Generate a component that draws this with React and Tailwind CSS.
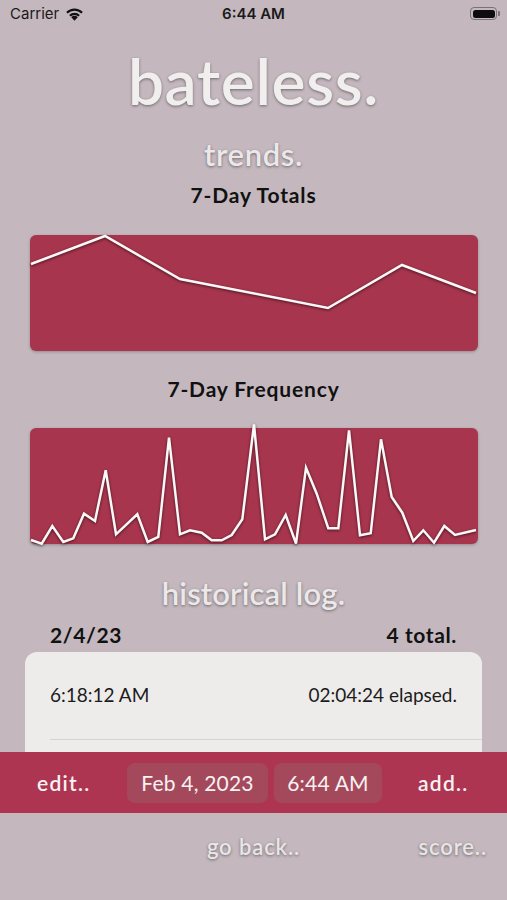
import React from 'react';

// chart points, in px inside each 448x116 panel
const TOTALS = [[1, 29], [75, 1], [150, 44], [298, 73], [372, 30], [446, 58]];
const FREQUENCY = [
  [1, 112], [11.7, 115.7], [22.3, 98], [33.3, 114], [43.3, 110.3], [54, 85.7], [65, 93],
  [75.7, 42.3], [86, 106.3], [107.3, 86.3], [117.7, 114], [128.3, 109], [139, 9.7],
  [150, 106.3], [160, 102.3], [171.7, 104.7], [181.7, 112.3], [191.7, 112.3], [201.7, 107],
  [212.3, 91.3], [224, -3.7], [235, 111.3], [245, 106.3], [255.7, 87], [266, 115.7],
  [276, 39.7], [286.7, 65.7], [298.3, 100.3], [308.3, 100.3], [319, 2.3], [330, 107.3],
  [340.7, 105.3], [351, 11.3], [361.7, 69], [372.3, 84.7], [383.3, 113], [393.3, 102.3],
  [404, 114.7], [414.3, 98], [425, 107], [446, 102],
];

const Chart = ({ points }) => (
  <div className="ml-[30px] w-[448px] h-[116px] rounded-[6px] bg-[#a8354e] shadow-[0_1px_3px_rgba(0,0,0,0.25)]">
    <svg
      width="448"
      height="116"
      viewBox="0 0 448 116"
      className="overflow-visible drop-shadow-[0_1px_1.5px_rgba(0,0,0,0.6)]"
    >
      <polyline
        points={points.map((p) => p.join(',')).join(' ')}
        fill="none"
        stroke="#fbf8f8"
        strokeWidth="2.5"
        strokeLinejoin="miter"
      />
    </svg>
  </div>
);

const StatusBar = () => (
  <div className="relative h-[28px] font-['Inter',sans-serif] text-[#1a1a1a]">
    <div className="absolute left-[10px] top-[5px] flex items-center gap-[6px]">
      <span className="text-[15px] leading-[18px]">Carrier</span>
      <svg width="19" height="14" viewBox="0 0 18 13">
        <path d="M9 12.8 L5.9 9.5 A4.4 4.4 0 0 1 12.1 9.5 Z" fill="#111" />
        <path d="M3.9 7.4 A7.2 7.2 0 0 1 14.1 7.4 L12.6 8.9 A5.1 5.1 0 0 0 5.4 8.9 Z" fill="#111" />
        <path d="M1.1 4.6 A11 11 0 0 1 16.9 4.6 L15.4 6.1 A8.9 8.9 0 0 0 2.6 6.1 Z" fill="#111" />
      </svg>
    </div>
    <div className="absolute inset-x-0 top-[5px] text-center text-[15px] leading-[18px] font-semibold">6:44 AM</div>
    <div className="absolute right-[7px] top-[7px] flex items-center">
      <div className="w-[27px] h-[13px] rounded-[4px] border border-[#7a7276] p-[1.5px]">
        <div className="w-full h-full rounded-[2.5px] bg-[#0d0d0d]" />
      </div>
      <div className="w-[2px] h-[5px] rounded-r-[1px] bg-[#7a7276] ml-[1px]" />
    </div>
  </div>
);

const App = () => {
  const soft = "[text-shadow:0_1px_3px_rgba(0,0,0,0.45)]";
  return (
    <div className="w-[507px] h-[900px] overflow-hidden bg-[#c4b8be] font-['Lato',sans-serif]">
      <StatusBar />

      {/* Header */}
      <h1 className={`mt-[21px] h-[64px] text-center text-[64px] leading-none font-semibold tracking-[0.01em] text-[#f1eeee] ${soft}`}>
        bateless.
      </h1>
      <h2 className={`mt-[26px] h-[32px] text-center text-[31px] leading-none font-semibold tracking-[0.02em] text-[#ece8e9] ${soft}`}>
        trends.
      </h2>

      <h3 className="mt-[13px] h-[21px] text-center text-[21px] leading-none font-bold tracking-[0.04em] text-[#111]">
        7-Day Totals
      </h3>
      <div className="mt-[30px]">
        <Chart points={TOTALS} />
      </div>

      <h3 className="mt-[27px] h-[21px] text-center text-[21px] leading-none font-bold tracking-[0.04em] text-[#111]">
        7-Day Frequency
      </h3>
      <div className="mt-[29px]">
        <Chart points={FREQUENCY} />
      </div>

      {/* Log */}
      <h2 className={`mt-[34px] h-[32px] text-center text-[31px] leading-none font-semibold tracking-[0.005em] text-[#ece8e9] ${soft}`}>
        historical log.
      </h2>
      <div className="mt-[14px] h-[21px] px-[50px] flex justify-between text-[21px] leading-none font-bold tracking-[0.03em] text-[#111]">
        <span>2/4/23</span>
        <span>4 total.</span>
      </div>

      <div className="mt-[7px] h-[100px] overflow-hidden">
        <div className="ml-[25px] w-[457px] h-[200px] rounded-t-[12px] bg-[#eeeceb]">
          <div className="h-[87px] px-[25px] flex items-center justify-between text-[19px] text-[#1c1c1c]">
            <span>6:18:12 AM</span>
            <span>02:04:24 elapsed.</span>
          </div>
          <div className="ml-[25px] h-px bg-[#d6d3d3]" />
        </div>
      </div>

      {/* Action bar */}
      <div className="h-[61px] bg-[#ae3551] flex items-center text-[21px] text-[#f7f2f3]">
        <div className="w-[127px] pl-[37px] font-semibold tracking-[0.06em]">edit..</div>
        <div className="w-[141px] h-[40px] rounded-[8px] bg-[#a4495c] flex items-center justify-center tracking-[0.01em]">
          Feb 4, 2023
        </div>
        <div className="ml-[6px] w-[108px] h-[40px] rounded-[8px] bg-[#a4495c] flex items-center justify-center tracking-[0.01em]">
          6:44 AM
        </div>
        <div className="flex-1 pl-[36px] font-semibold tracking-[0.06em]">add..</div>
      </div>

      {/* Bottom nav */}
      <div className={`mt-[23px] grid grid-cols-3 text-[22px] leading-none font-semibold tracking-[0.04em] text-[#e9e5e6] ${soft}`}>
        <div />
        <div className="text-center">go back..</div>
        <div className="text-right pr-[20px]">score..</div>
      </div>
    </div>
  );
};

export default App;
